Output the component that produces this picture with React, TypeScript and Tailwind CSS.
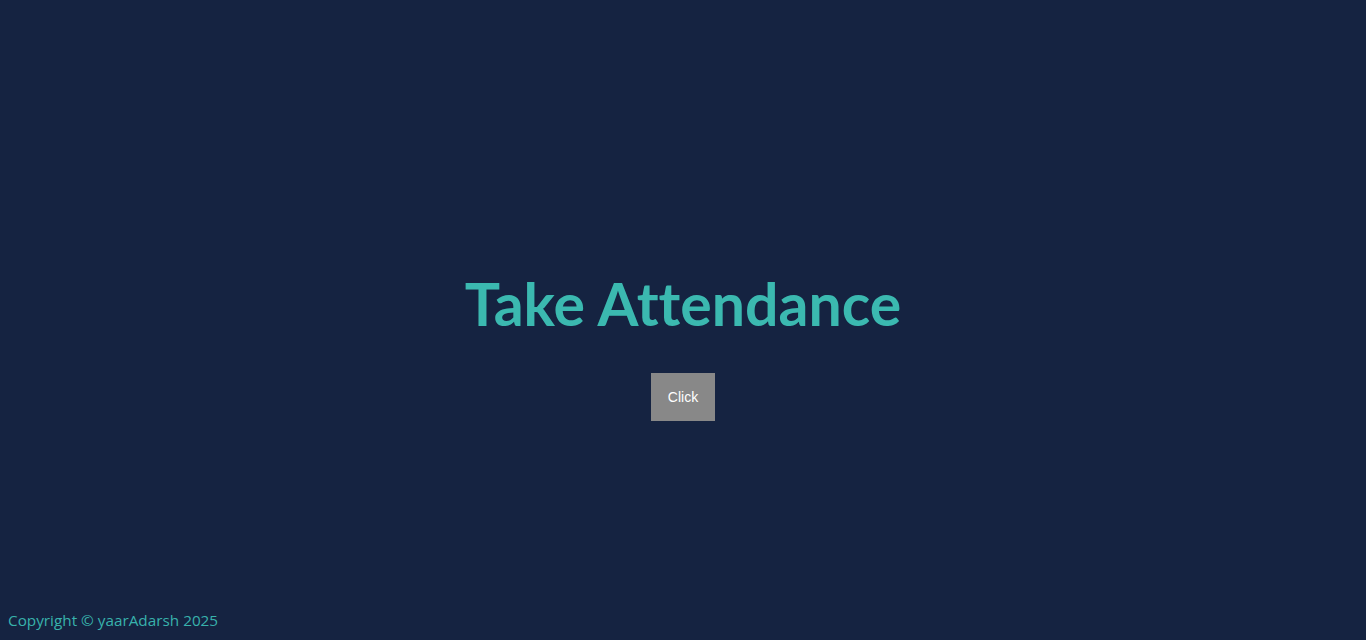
import React from "react";

const App: React.FC = () => {
  return (
    <div className="min-h-screen flex flex-col bg-[#152341] font-['Segoe_UI','Open_Sans',sans-serif]">
      <main className="flex-1 flex flex-col items-center pt-[270px]">
        <h1 className="text-[59px] leading-[67px] font-bold text-[#3bb9b0] font-['Lato',sans-serif] [font-variant-ligatures:none]">
          Take Attendance
        </h1>
        <button className="mt-9 h-12 w-16 bg-[#888888] text-white text-sm font-['Liberation_Sans',Arial,sans-serif]">
          Click
        </button>
      </main>
      <footer className="p-2 text-[15.3px] leading-6 text-[#38b2ac]">
        Copyright © yaarAdarsh 2025
      </footer>
    </div>
  );
};

export default App;
